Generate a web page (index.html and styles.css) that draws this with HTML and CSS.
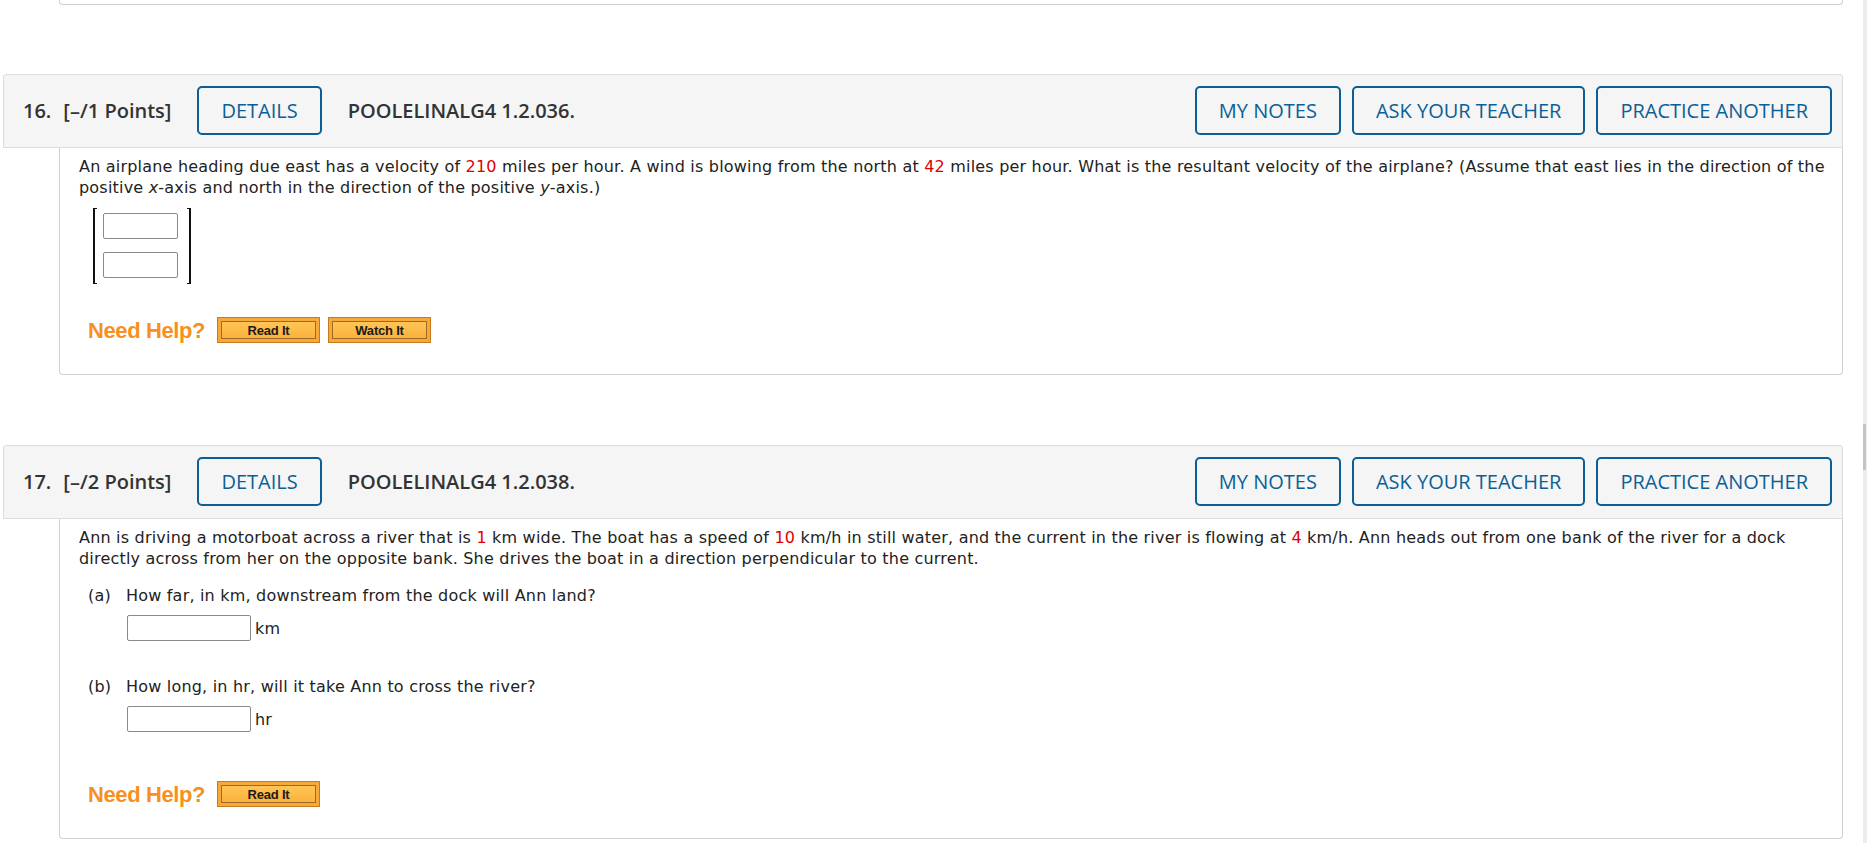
FILE: index.html
```html
<!DOCTYPE html>
<html lang="en">
<head>
<meta charset="utf-8">
<title>Questions</title>
<link rel="stylesheet" href="styles.css">
</head>
<body>
<div class="page">
  <div class="prev-card"></div>

  <section class="question q16">
    <div class="q-header">
      <div class="q-left">
        <span class="q-num">16.</span>
        <span class="q-points">[–/1 Points]</span>
        <button class="btn">DETAILS</button>
        <span class="q-code">POOLELINALG4 1.2.036.</span>
      </div>
      <div class="q-right">
        <button class="btn">MY NOTES</button>
        <button class="btn">ASK YOUR TEACHER</button>
        <button class="btn">PRACTICE ANOTHER</button>
      </div>
    </div>
    <div class="q-body">
      <p class="q-text">An airplane heading due east has a velocity of <span class="num">210</span> miles per hour. A wind is blowing from the north at <span class="num">42</span> miles per hour. What is the resultant velocity of the airplane? (Assume that east lies in the direction of the positive <i>x</i>-axis and north in the direction of the positive <i>y</i>-axis.)</p>
      <div class="matrix">
        <span class="bracket bracket-left"></span>
        <div class="matrix-cells">
          <input class="ans ans-small" type="text">
          <input class="ans ans-small" type="text">
        </div>
        <span class="bracket bracket-right"></span>
      </div>
      <div class="help">
        <span class="help-label">Need Help?</span>
        <span class="help-btn"><span class="help-inner">Read It</span></span>
        <span class="help-btn"><span class="help-inner">Watch It</span></span>
      </div>
    </div>
  </section>

  <section class="question q17">
    <div class="q-header">
      <div class="q-left">
        <span class="q-num">17.</span>
        <span class="q-points">[–/2 Points]</span>
        <button class="btn">DETAILS</button>
        <span class="q-code">POOLELINALG4 1.2.038.</span>
      </div>
      <div class="q-right">
        <button class="btn">MY NOTES</button>
        <button class="btn">ASK YOUR TEACHER</button>
        <button class="btn">PRACTICE ANOTHER</button>
      </div>
    </div>
    <div class="q-body">
      <p class="q-text">Ann is driving a motorboat across a river that is <span class="num">1</span> km wide. The boat has a speed of <span class="num">10</span> km/h in still water, and the current in the river is flowing at <span class="num">4</span> km/h. Ann heads out from one bank of the river for a dock directly across from her on the opposite bank. She drives the boat in a direction perpendicular to the current.</p>
      <div class="part part-a">
        <div class="part-q"><span class="part-label">(a)</span><span>How far, in km, downstream from the dock will Ann land?</span></div>
        <div class="part-ans"><input class="ans ans-wide" type="text"><span class="unit">km</span></div>
      </div>
      <div class="part part-b">
        <div class="part-q"><span class="part-label">(b)</span><span>How long, in hr, will it take Ann to cross the river?</span></div>
        <div class="part-ans"><input class="ans ans-wide" type="text"><span class="unit">hr</span></div>
      </div>
      <div class="help help-17">
        <span class="help-label">Need Help?</span>
        <span class="help-btn"><span class="help-inner">Read It</span></span>
      </div>
    </div>
  </section>
</div>
<div class="scrollbar"><div class="scroll-thumb"></div></div>
</body>
</html>
```

FILE: styles.css
```css
html, body {
  margin: 0;
  padding: 0;
  background: #fff;
  overflow: hidden;
}

.page {
  margin-left: 3px;
  width: 1840px;
}

.prev-card {
  margin-left: 56px;
  height: 4px;
  border: 1px solid #cfcfcf;
  border-top: none;
  border-radius: 0 0 4px 4px;
}

.question {
  margin-top: 69px;
}
.q17 {
  margin-top: 70px;
}

.q-header {
  display: flex;
  justify-content: space-between;
  align-items: center;
  background: #f5f5f5;
  border: 1px solid #dcdcdc;
  border-radius: 3px 3px 0 0;
  padding: 11px 10px 12px 19px;
  font-family: "Open Sans", "Liberation Sans", sans-serif;
  color: #333;
}

.q-left {
  display: flex;
  align-items: center;
  gap: 26px;
}

.q-num {
  font-size: 20px;
  font-weight: 600;
  margin-right: -14px;
}

.q-points, .q-code {
  font-size: 20px;
  font-weight: 600;
}

.q-right {
  display: flex;
  gap: 11px;
}

.btn {
  height: 49px;
  padding: 0 22px;
  border: 2px solid #0b5f97;
  border-radius: 5px;
  background: transparent;
  color: #0b5f97;
  font-family: "Open Sans", "Liberation Sans", sans-serif;
  font-size: 20px;
  font-weight: 400;
  line-height: 1;
  cursor: pointer;
}

.q-body {
  margin-left: 56px;
  border: 1px solid #cfcfcf;
  border-top: none;
  border-radius: 0 0 4px 4px;
  padding: 8px 12px 31px 19px;
  font-family: "DejaVu Sans", Verdana, sans-serif;
  font-size: 16px;
  letter-spacing: 0.2px;
  line-height: 21px;
  color: #222;
}

.q-text {
  margin: 0;
}

.num {
  color: #e00000;
}

.matrix {
  display: flex;
  align-items: stretch;
  margin: 10px 0 0 14px;
  width: 98px;
  height: 76px;
}

.bracket {
  width: 3px;
  border: 1px solid #111;
}
.bracket-left {
  border-right: none;
  border-left-width: 2px;
}
.bracket-right {
  border-left: none;
  border-right-width: 2px;
}

.matrix-cells {
  display: flex;
  flex-direction: column;
  gap: 13px;
  padding: 5px 9px 0 6px;
}

.ans {
  box-sizing: border-box;
  margin: 0;
  padding: 0 4px;
  border: 1px solid #8a8a8a;
  border-radius: 2px;
  background: #fff;
  font-family: "DejaVu Sans", Verdana, sans-serif;
  font-size: 14px;
}
.ans-small {
  width: 75px;
  height: 26px;
}
.ans-wide {
  width: 124px;
  height: 26px;
}

.help {
  display: flex;
  align-items: center;
  margin: 33px 0 0 9px;
  height: 26px;
}
.help-17 {
  margin-top: 49px;
}

.help-label {
  font-family: "Liberation Sans", Arial, sans-serif;
  font-weight: bold;
  font-size: 22px;
  color: #f7901e;
  margin-right: 12px;
  letter-spacing: -0.4px;
}

.help-btn {
  display: flex;
  box-sizing: border-box;
  width: 103px;
  height: 26px;
  padding: 3px;
  margin-right: 8px;
  background: #f6a83a;
  border: 1px solid #c9791a;
}

.help-inner {
  flex: 1;
  display: flex;
  align-items: center;
  justify-content: center;
  background: linear-gradient(#ffc657, #fbb13c);
  border: 1px solid #9a6a2a;
  font-family: "Liberation Sans", Arial, sans-serif;
  font-weight: bold;
  font-size: 13px;
  color: #1a1a1a;
  letter-spacing: -0.2px;
}

.part {
  margin-left: 9px;
}
.part-a {
  margin-top: 16px;
}
.part-b {
  margin-top: 35px;
}

.part-q {
  display: flex;
}
.part-label {
  width: 38px;
}

.part-ans {
  display: flex;
  align-items: center;
  margin: 9px 0 0 39px;
}

.unit {
  margin-left: 4px;
}

.scrollbar {
  position: fixed;
  top: 0;
  right: 0;
  width: 4px;
  height: 100%;
  background: #ececec;
}
.scroll-thumb {
  position: absolute;
  top: 424px;
  left: 0;
  width: 3px;
  height: 46px;
  background: #c4c4c4;
}
```
